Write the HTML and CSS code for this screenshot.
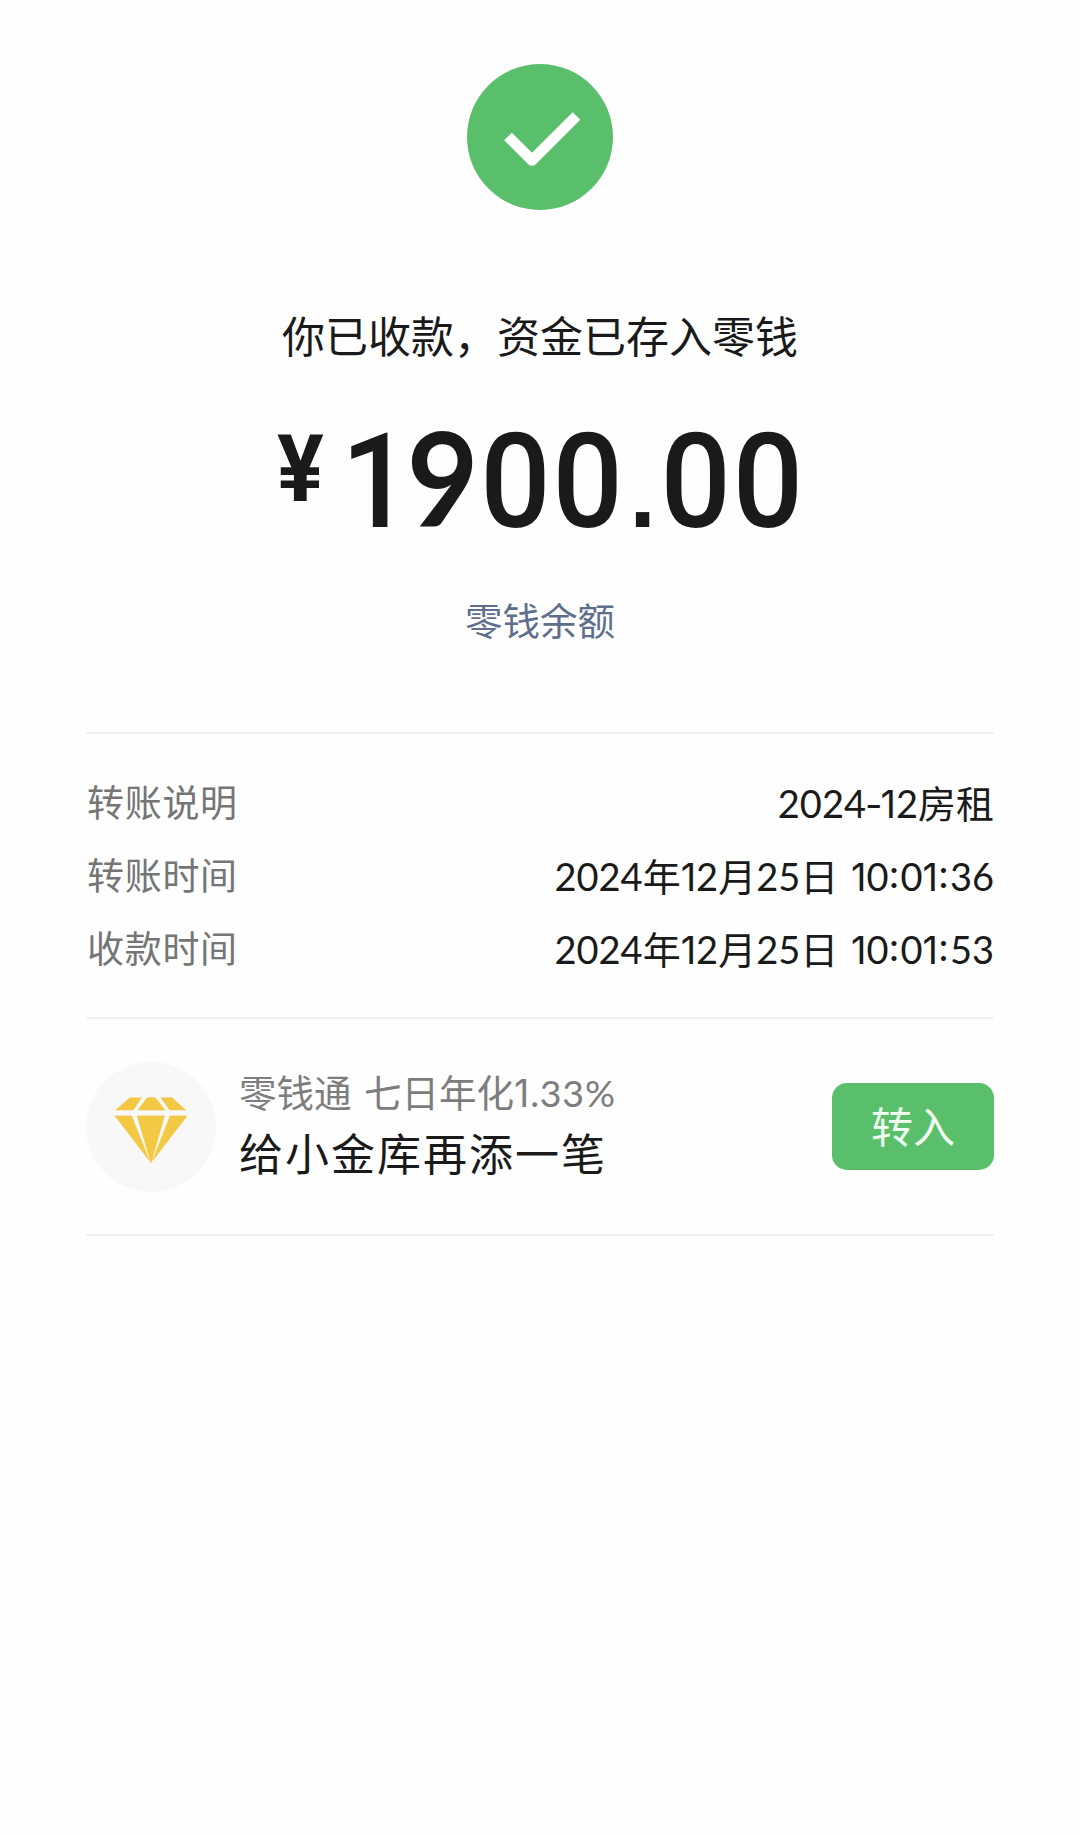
FILE: index.html
```
<!DOCTYPE html>
<html lang="zh-CN">
<head>
    <meta charset="UTF-8">
    <meta name="viewport" content="width=device-width, initial-scale=1.0">
    <title>转账详情</title>
    <link rel="stylesheet" href="styles.css">
</head>
<body>
    <div class="container">
        <div class="status">
            <svg class="status-icon" viewBox="0 0 146 146">
                <circle cx="73" cy="73" r="73" fill="#5abf6b"/>
                <path d="M41 72.5L65 96.3L109.5 52" fill="none" stroke="#fff" stroke-width="10.8" stroke-linejoin="round"/>
            </svg>
            <p class="status-text">你已收款，资金已存入零钱</p>
            <div class="amount">
                <span class="currency">¥</span>
                <span class="number">1<span class="nine">9</span>00<span class="dot">.</span>00</span>
            </div>
            <a class="balance">零钱余额</a>
        </div>

        <div class="details">
            <div class="row">
                <span class="label">转账说明</span>
                <span class="value">2024<span class="hyphen">-</span><span class="n1">1</span>2房租</span>
            </div>
            <div class="row">
                <span class="label">转账时间</span>
                <span class="value">2024年<span class="n1">1</span>2月25日 <span class="n1">1</span>0<span class="colon">:</span>0<span class="n1">1</span><span class="colon">:</span>36</span>
            </div>
            <div class="row">
                <span class="label">收款时间</span>
                <span class="value">2024年<span class="n1">1</span>2月25日 <span class="n1">1</span>0<span class="colon">:</span>0<span class="n1">1</span><span class="colon">:</span>53</span>
            </div>
        </div>

        <div class="promo">
            <svg class="promo-icon" viewBox="49 185 388 388">
                <circle cx="243" cy="379" r="194" fill="#f8f8f8"/>
                <g fill="#f3c842" stroke="#f3c842" stroke-width="2" stroke-linejoin="round">
                    <path d="M180 292H214L190 328H138Z"/>
                    <path d="M232 292H256L284 328H204Z"/>
                    <path d="M273 292H306L346 328H299Z"/>
                    <path d="M136 346H185L238 479Z"/>
                    <path d="M202 346H283L243 486Z"/>
                    <path d="M300 346H350L248 479Z"/>
                </g>
            </svg>
            <div class="promo-text">
                <p class="promo-rate">零钱通 七日年化<span class="rate"><span class="n1">1</span>.33%</span></p>
                <p class="promo-title">给小金库再添一笔</p>
            </div>
            <button class="promo-button">转入</button>
        </div>
    </div>
</body>
</html>
```

FILE: styles.css
```
* {
    box-sizing: border-box;
}
body {
    font-family: Lato, 'Noto Sans CJK SC', sans-serif;
    background-color: #fefefe;
    color: #1a1a1a;
    margin: 0;
}
p {
    margin: 0;
}
.container {
    width: 908px;
    margin: 0 auto;
    padding-top: 64px;
}
.status {
    display: flex;
    flex-direction: column;
    align-items: center;
    height: 668px;
}
.status-icon {
    width: 146px;
    height: 146px;
}
.status-text {
    margin-top: 97px;
    font-size: 43px;
    line-height: 60px;
}
.amount {
    display: flex;
    align-items: flex-start;
    width: 526px;
    height: 140px;
    margin-top: 40px;
    font-family: Roboto, sans-serif;
    font-weight: 500;
    line-height: 140px;
}
.currency {
    flex-shrink: 0;
    width: 64px;
    font-size: 92px;
    font-weight: 700;
    line-height: 125px;
    transform: scaleX(0.95);
    transform-origin: 0 0;
}
.number {
    font-size: 131px;
    letter-spacing: 2px;
    white-space: nowrap;
    transform: scaleX(0.945);
    transform-origin: 0 0;
}
.nine {
    margin-left: -7px;
    font-family: Lato, sans-serif;
    font-weight: 700;
}
.dot {
    margin: 0 3px 0 5px;
    font-family: 'Liberation Sans', sans-serif;
    font-size: 100px;
    font-weight: 700;
    line-height: 1;
}
.balance {
    margin-top: 47px;
    color: #5f6e8c;
    font-size: 37.5px;
    line-height: 54px;
}
.details {
    height: 285px;
    padding-top: 33px;
    border-top: 2px solid #f1f1f1;
}
.row {
    display: flex;
    justify-content: space-between;
    height: 73px;
    line-height: 72px;
}
.label {
    margin-left: 1px;
    color: #757575;
    font-size: 37px;
    letter-spacing: 0.7px;
}
.value {
    font-size: 38px;
    word-spacing: 3px;
}
.n1 {
    font-family: Inter, sans-serif;
    line-height: 1;
}
.hyphen {
    margin: 0 -2px -0 -1px;
    font-family: Inter, sans-serif;
    line-height: 1;
}
.colon {
    margin-right: 1px;
    font-family: Inter, sans-serif;
    line-height: 1;
    vertical-align: 3px;
}
.promo {
    display: flex;
    align-items: center;
    height: 219px;
    border-top: 2px solid #f1f1f1;
    border-bottom: 2px solid #f1f1f1;
}
.promo-icon {
    width: 130px;
    height: 130px;
}
.promo-text {
    flex: 1;
    margin-left: 23px;
}
.promo-rate {
    color: #7d7d7d;
    font-size: 37.5px;
    line-height: 54px;
    word-spacing: 3px;
}
.rate {
    letter-spacing: 0.8px;
}
.promo-title {
    padding-top: 1px;
    font-size: 44px;
    letter-spacing: 2px;
    line-height: 67px;
}
.promo-button {
    width: 162px;
    height: 87px;
    padding: 0 0 5px;
    border: none;
    border-radius: 15px;
    background-color: #5abf6b;
    color: #f0fff0;
    font-family: inherit;
    font-size: 42px;
}
```
